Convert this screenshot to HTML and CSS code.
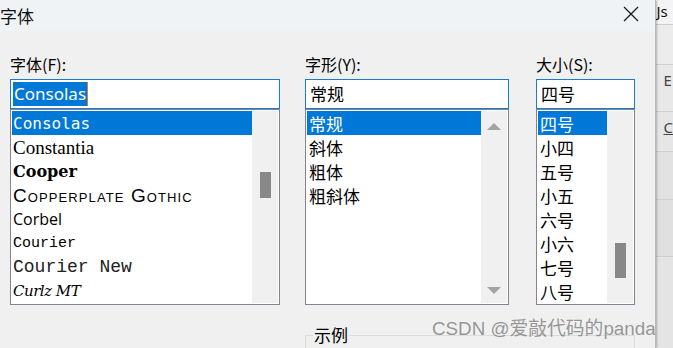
FILE: index.html
```html
<!DOCTYPE html>
<html lang="zh-CN">
<head>
    <meta charset="UTF-8">
    <title>字体</title>
    <link rel="stylesheet" href="styles.css">
</head>
<body>
<div id="screen">
    <div id="dialog">
        <div class="titlebar">
            <span class="title">字体</span>
            <svg class="close" width="16" height="16" viewBox="0 0 16 16">
                <path d="M1 1 L15 15 M15 1 L1 15" stroke="#1a1a1a" stroke-width="1.3" fill="none"/>
            </svg>
        </div>
        <div class="content">
            <div class="columns">
                <div class="col col-face">
                    <div class="label">字体(F):</div>
                    <div class="combo"><span class="hl">Consolas</span><span class="caret"></span></div>
                    <div class="listbox">
                        <ul class="items">
                            <li class="selected f-consolas">Consolas</li>
                            <li class="f-constantia">Constantia</li>
                            <li class="f-cooper">Cooper</li>
                            <li class="f-copper">Copperplate Gothic</li>
                            <li class="f-corbel">Corbel</li>
                            <li class="f-courier">Courier</li>
                            <li class="f-couriernew">Courier New</li>
                            <li class="f-curlz">Curlz MT</li>
                        </ul>
                        <div class="scrollbar"><div class="thumb thumb-face"></div></div>
                    </div>
                </div>
                <div class="col col-style">
                    <div class="label">字形(Y):</div>
                    <div class="combo"><span class="plain">常规</span></div>
                    <div class="listbox">
                        <ul class="items cjk">
                            <li class="selected">常规</li>
                            <li>斜体</li>
                            <li>粗体</li>
                            <li>粗斜体</li>
                        </ul>
                        <div class="scrollbar arrows">
                            <span class="arrow up"></span>
                            <span class="arrow down"></span>
                        </div>
                    </div>
                </div>
                <div class="col col-size">
                    <div class="label">大小(S):</div>
                    <div class="combo"><span class="plain">四号</span></div>
                    <div class="listbox">
                        <ul class="items cjk">
                            <li class="selected">四号</li>
                            <li>小四</li>
                            <li>五号</li>
                            <li>小五</li>
                            <li>六号</li>
                            <li>小六</li>
                            <li>七号</li>
                            <li>八号</li>
                        </ul>
                        <div class="scrollbar"><div class="thumb thumb-size"></div></div>
                    </div>
                </div>
            </div>
            <fieldset class="sample">
                <legend>示例</legend>
            </fieldset>
        </div>
        <div class="watermark">CSDN @爱敲代码的panda</div>
    </div>
    <div id="backdrop">
        <div class="bd-top">Js</div>
        <div class="bd-row bd-a"></div>
        <div class="bd-row bd-b">E</div>
        <div class="bd-row bd-c">C</div>
        <div class="bd-row bd-d"></div>
        <div class="bd-row bd-e"></div>
    </div>
</div>
</body>
</html>
```

FILE: styles.css
```css
*{
    margin: 0;
    padding: 0;
    box-sizing: border-box;
}
body{
    width: 673px;
    height: 348px;
    overflow: hidden;
    background: #f0f0f0;
    font-family: "Noto Sans CJK SC", "Noto Sans", sans-serif;
    color: #000;
}
#screen{
    display: flex;
    height: 348px;
}
#dialog{
    position: relative;
    width: 659px;
    height: 348px;
    background: #f0f0f0;
    border-right: 1px solid #b9b9b9;
    box-shadow: 1px 0 2px rgba(0,0,0,0.25);
    overflow: hidden;
}
.titlebar{
    height: 31px;
    background: #eff3f5;
    display: flex;
    align-items: center;
    justify-content: space-between;
    padding-right: 16px;
}
.title{
    font-size: 17px;
    line-height: 20px;
    color: #111;
}
.close{
    margin-top: -4px;
}
.content{
    padding: 23px 0 0 10px;
}
.columns{
    display: flex;
}
.col-face{
    width: 270px;
}
.col-style{
    width: 204px;
    margin-left: 25px;
}
.col-size{
    width: 99px;
    margin-left: 27px;
}
.label{
    font-size: 16px;
    line-height: 20px;
    height: 20px;
    margin-bottom: 5px;
}
.combo{
    height: 30px;
    background: #fff;
    border: 1px solid #1a7bd4;
    padding: 2px 2px;
    display: flex;
    align-items: center;
}
.combo .hl{
    background: #0078d7;
    color: #fff;
    font-family: "Noto Sans", sans-serif;
    font-size: 17px;
    line-height: 24px;
    height: 24px;
    padding: 0 1px;
}
.combo .caret{
    width: 1px;
    height: 24px;
    background: #e07b1f;
}
.combo .plain{
    font-size: 17px;
    line-height: 24px;
    padding-left: 2px;
}
.listbox{
    height: 196px;
    background: #fff;
    border: 1px solid #85848e;
    padding: 1px;
    display: flex;
}
.items{
    flex: 1;
    list-style: none;
}
.items li{
    height: 24px;
    line-height: 25px;
    padding-left: 1px;
    white-space: nowrap;
    overflow: hidden;
}
.items .selected{
    background: #0078d7;
    color: #fff;
}
.cjk li{
    font-size: 17px;
    padding-left: 2px;
}
.scrollbar{
    width: 26px;
    background: #f0f0f0;
    display: flex;
    flex-direction: column;
    align-items: center;
}
.thumb{
    width: 11px;
    background: #888;
}
.thumb-face{
    margin-top: 61px;
    height: 26px;
}
.thumb-size{
    margin-top: 132px;
    height: 35px;
}
.arrows{
    justify-content: space-between;
    padding: 12px 0 9px;
}
.arrow{
    width: 0;
    height: 0;
    border-left: 7px solid transparent;
    border-right: 7px solid transparent;
}
.arrow.up{
    border-bottom: 7px solid #a3a3a3;
}
.arrow.down{
    border-top: 7px solid #a3a3a3;
}
.f-consolas{
    font-family: "DejaVu Sans Mono", monospace;
    font-size: 16px;
}
.f-constantia{
    font-family: "Liberation Serif", serif;
    font-size: 19px;
}
.f-cooper{
    font-family: "DejaVu Serif", serif;
    font-weight: bold;
    font-size: 16px;
}
.f-copper{
    font-family: "Liberation Sans", sans-serif;
    font-variant: small-caps;
    font-size: 19px;
    letter-spacing: 1.1px;
}
.f-corbel{
    font-family: "Open Sans", sans-serif;
    font-size: 16px;
}
.f-courier{
    font-family: "Liberation Mono", monospace;
    font-size: 15px;
}
.f-couriernew{
    font-family: "Liberation Mono", monospace;
    font-size: 18px;
    color: #222;
}
.f-curlz{
    font-family: "DejaVu Serif", serif;
    font-style: italic;
    font-size: 15px;
    letter-spacing: -0.5px;
}
.sample{
    margin: 20px 0 0 295px;
    width: 330px;
    height: 60px;
    border: 1px solid #dcdcdc;
    padding: 0 7px;
}
.sample legend{
    font-size: 17px;
    line-height: 20px;
    padding: 0 1px;
}
.watermark{
    position: absolute;
    left: 432px;
    top: 317px;
    font-family: "Liberation Sans", "Noto Sans CJK SC", sans-serif;
    font-size: 18.8px;
    line-height: 24px;
    color: rgba(110,110,110,0.7);
    white-space: nowrap;
}
#backdrop{
    flex: 1;
    background: #e4e4e4;
    display: flex;
    flex-direction: column;
    font-family: "Noto Sans", sans-serif;
    font-size: 15px;
    color: #444;
}
.bd-top{
    height: 25px;
    background: #f4f4f4;
    border-bottom: 1px solid #cfcfcf;
    color: #111;
    padding-left: 1px;
    line-height: 22px;
}
.bd-row{
    border-bottom: 1px solid #cfcfcf;
    padding-left: 8px;
    line-height: 30px;
}
.bd-a{ height: 40px; background: #ececec; }
.bd-b{ height: 47px; background: #e8e8e8; }
.bd-c{ height: 40px; background: #e6e6e6; text-decoration: underline; }
.bd-d{ height: 48px; background: #e2e2e2; }
.bd-e{ height: 57px; background: #e0e0e0; }
```
